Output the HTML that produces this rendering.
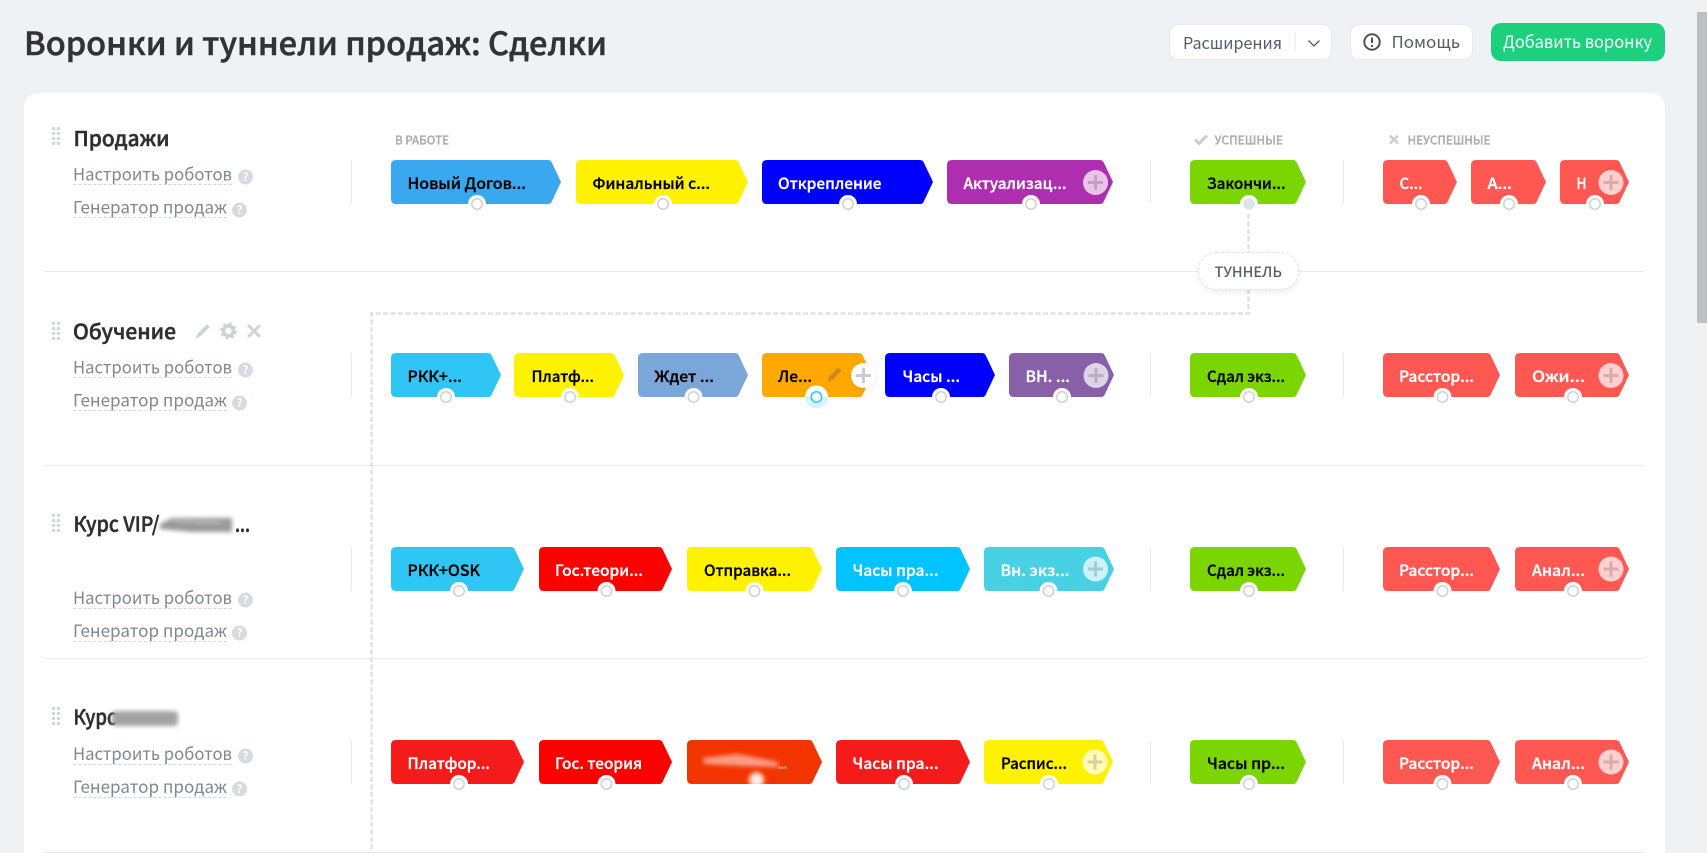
<!DOCTYPE html>
<html lang="ru"><head><meta charset="utf-8"><title>Воронки и туннели продаж: Сделки</title>
<style>
html,body{margin:0;padding:0;width:1707px;height:853px;overflow:hidden;background:#eef2f5}
svg{display:block;position:absolute;left:0;top:0}
text{font-family:"Noto Sans CJK SC","Liberation Sans",sans-serif}
.h{font-size:32px;font-weight:500;fill:#333;stroke:#333;stroke-width:.55}
.t{font-size:20.5px;font-weight:500;fill:#2f2f2f;stroke:#2f2f2f;stroke-width:.5}
.l{font-size:17px;fill:#7f8791}
.s{font-size:12px;font-weight:500;fill:#a9aeb6;stroke:#a9aeb6;stroke-width:.3}
.b{font-size:15.5px;font-weight:500;fill:#000;stroke:#000;stroke-width:.3}
.w{font-size:15.5px;font-weight:500;fill:#fff;stroke:#fff;stroke-width:.3}
.u{stroke:#cfd4da;stroke-width:1;stroke-dasharray:3 2;fill:none}
.d{stroke:#e8eaed;stroke-width:1;fill:none}
.q{font-size:11px;font-weight:700;fill:#fff;text-anchor:middle}
</style></head><body>
<svg width="1707" height="853" viewBox="0 0 1707 853" xmlns="http://www.w3.org/2000/svg">
<defs>
<path id="w69" d="M5 0h51q3 0 4 3l9 19-9 19q-1 3-4 3h-51q-5 0-5-5v-34q0-5 5-5z"/>
<path id="w74" d="M5 0h56q3 0 4 3l9 19-9 19q-1 3-4 3h-56q-5 0-5-5v-34q0-5 5-5z"/>
<path id="w75" d="M5 0h57q3 0 4 3l9 19-9 19q-1 3-4 3h-57q-5 0-5-5v-34q0-5 5-5z"/>
<path id="w105" d="M5 0h87q3 0 4 3l9 19-9 19q-1 3-4 3h-87q-5 0-5-5v-34q0-5 5-5z"/>
<path id="w110" d="M5 0h92q3 0 4 3l9 19-9 19q-1 3-4 3h-92q-5 0-5-5v-34q0-5 5-5z"/>
<path id="w114" d="M5 0h96q3 0 4 3l9 19-9 19q-1 3-4 3h-96q-5 0-5-5v-34q0-5 5-5z"/>
<path id="w116" d="M5 0h98q3 0 4 3l9 19-9 19q-1 3-4 3h-98q-5 0-5-5v-34q0-5 5-5z"/>
<path id="w117" d="M5 0h99q3 0 4 3l9 19-9 19q-1 3-4 3h-99q-5 0-5-5v-34q0-5 5-5z"/>
<path id="w129" d="M5 0h111q3 0 4 3l9 19-9 19q-1 3-4 3h-111q-5 0-5-5v-34q0-5 5-5z"/>
<path id="w130" d="M5 0h112q3 0 4 3l9 19-9 19q-1 3-4 3h-112q-5 0-5-5v-34q0-5 5-5z"/>
<path id="w133" d="M5 0h115q3 0 4 3l9 19-9 19q-1 3-4 3h-115q-5 0-5-5v-34q0-5 5-5z"/>
<path id="w134" d="M5 0h116q3 0 4 3l9 19-9 19q-1 3-4 3h-116q-5 0-5-5v-34q0-5 5-5z"/>
<path id="w135" d="M5 0h117q3 0 4 3l9 19-9 19q-1 3-4 3h-117q-5 0-5-5v-34q0-5 5-5z"/>
<path id="w166" d="M5 0h148q3 0 4 3l9 19-9 19q-1 3-4 3h-148q-5 0-5-5v-34q0-5 5-5z"/>
<path id="w170" d="M5 0h152q3 0 4 3l9 19-9 19q-1 3-4 3h-152q-5 0-5-5v-34q0-5 5-5z"/>
<path id="w171" d="M5 0h153q3 0 4 3l9 19-9 19q-1 3-4 3h-153q-5 0-5-5v-34q0-5 5-5z"/>
<path id="w172" d="M5 0h154q3 0 4 3l9 19-9 19q-1 3-4 3h-154q-5 0-5-5v-34q0-5 5-5z"/>
<g id="dot"><circle r="9" fill="#fff"/><circle r="5.2" fill="#fff" stroke="#cdd1d7" stroke-width="1.5"/></g>
<g id="plus"><circle r="12.5" fill="#fff" fill-opacity=".72"/><path d="M-7.5 0H7.5M0-7.5V7.5" stroke="#000" stroke-opacity=".17" stroke-width="3"/></g>
<g id="hq"><circle r="7.5" fill="#d6dae1"/><text class="q" y="4">?</text></g>
<g id="drag" fill="#d3d6da"><rect x="0" y="0" width="3" height="3"/><rect x="5" y="0" width="3" height="3"/><rect x="0" y="5" width="3" height="3"/><rect x="5" y="5" width="3" height="3"/><rect x="0" y="10" width="3" height="3"/><rect x="5" y="10" width="3" height="3"/><rect x="0" y="15" width="3" height="3"/><rect x="5" y="15" width="3" height="3"/></g>
<filter id="bl" x="-30%" y="-100%" width="160%" height="300%"><feGaussianBlur stdDeviation="2.2"/></filter>
<filter id="bl2" x="-50%" y="-100%" width="200%" height="300%"><feGaussianBlur stdDeviation="2.5"/></filter>
<filter id="sh" x="-20%" y="-30%" width="140%" height="170%"><feDropShadow dx="0" dy="2" stdDeviation="3" flood-color="#000" flood-opacity=".08"/></filter>
</defs>

<!-- page -->
<rect width="1707" height="853" fill="#eef2f5"/>
<rect x="1697" y="0" width="10" height="853" fill="#f1f1f1"/>
<rect x="1697" y="12" width="10" height="311" fill="#bcc0c2"/>
<text class="h" x="24" y="55" textLength="583" lengthAdjust="spacingAndGlyphs">Воронки и туннели продаж: Сделки</text>

<!-- header buttons -->
<rect x="1169.500" y="24.500" width="162" height="35" rx="9" fill="#fff" stroke="#e6e9ec"/>
<text x="1183" y="49" font-size="16.500" fill="#535c69" textLength="99" lengthAdjust="spacingAndGlyphs">Расширения</text>
<path d="M1295 32V52" stroke="#e3e5e8"/>
<path d="M1308.500 40.500l5.500 5.500 5.500-5.500" fill="none" stroke="#535c69" stroke-width="1.3"/>
<rect x="1350.500" y="24.500" width="122" height="35" rx="9" fill="#fff" stroke="#e6e9ec"/>
<circle cx="1372" cy="42" r="7.700" fill="none" stroke="#4a525e" stroke-width="2"/>
<path d="M1372 37.500v5.500M1372 45v2" stroke="#4a525e" stroke-width="2"/>
<text x="1391.500" y="48" font-size="16.500" fill="#535c69" textLength="68.500" lengthAdjust="spacingAndGlyphs">Помощь</text>
<rect x="1491" y="23" width="174" height="38" rx="10" fill="#1dd07d"/>
<text x="1503" y="48" font-size="17" fill="#fff" textLength="149" lengthAdjust="spacingAndGlyphs">Добавить воронку</text>

<!-- card -->
<path d="M24 853V109q0-16 16-16H1649q16 0 16 16V853z" fill="#fff"/>
<path class="d" d="M44 271.500H1644M44 465.500H1644M44 658.500H1644M44 852.500H1644"/>

<!-- column labels -->
<text class="s" x="395" y="144.500" textLength="54" lengthAdjust="spacingAndGlyphs">В РАБОТЕ</text>
<path d="M1195 139.500l4 4 8-8" fill="none" stroke="#c9cdd2" stroke-width="3"/>
<text class="s" x="1214.500" y="144.500" textLength="68.500" lengthAdjust="spacingAndGlyphs">УСПЕШНЫЕ</text>
<path d="M1390 135.500l8 8M1398 135.500l-8 8" fill="none" stroke="#c9cdd2" stroke-width="2.500"/>
<text class="s" x="1407.500" y="144.500" textLength="83" lengthAdjust="spacingAndGlyphs">НЕУСПЕШНЫЕ</text>

<!-- dividers -->
<path class="d" d="M351.500 160V204M1150.500 160V204M1343.500 160V204M351.500 353V397M1150.500 353V397M1343.500 353V397M351.500 547V591M1150.500 547V591M1343.500 547V591M351.500 740V784M1150.500 740V784M1343.500 740V784"/>

<!-- tunnel line -->
<path d="M1248.500 214V313.500H371.500V853" fill="none" stroke="#dde1e6" stroke-width="2.500" stroke-dasharray="5 2.500"/>
<rect x="1198.500" y="252.500" width="100" height="37" rx="18" fill="#fff" stroke="#dfe3e7" stroke-dasharray="3 2" filter="url(#sh)"/>
<text x="1214.500" y="277" font-size="14" font-weight="500" fill="#585d64" textLength="67.500" lengthAdjust="spacingAndGlyphs">ТУННЕЛЬ</text>

<!-- left column row 1 -->
<use href="#drag" x="52" y="127"/>
<text class="t" x="73.500" y="146" textLength="96" lengthAdjust="spacingAndGlyphs">Продажи</text>
<text class="l" x="73" y="180.500" textLength="159" lengthAdjust="spacingAndGlyphs">Настроить роботов</text>
<path class="u" d="M73.500 184.500H232"/><use href="#hq" x="245.500" y="177"/>
<text class="l" x="73" y="213.500" textLength="154" lengthAdjust="spacingAndGlyphs">Генератор продаж</text>
<path class="u" d="M73.500 217.500H227"/><use href="#hq" x="239.500" y="210"/>

<!-- left column row 2 -->
<use href="#drag" x="52" y="322"/>
<text class="t" x="73" y="339" textLength="103" lengthAdjust="spacingAndGlyphs">Обучение</text>
<path d="M196.500 337.500l2-4 8.500-8.500 2 2-8.500 8.500z" fill="#cfd3d7" stroke="#cfd3d7" stroke-width="1.200"/>
<circle cx="228.500" cy="331" r="5" fill="none" stroke="#cfd3d7" stroke-width="3.500"/>
<circle cx="228.500" cy="331" r="7.200" fill="none" stroke="#cfd3d7" stroke-width="2.500" stroke-dasharray="3 2.650"/>
<path d="M248 325l12 12M260 325l-12 12" stroke="#cfd3d7" stroke-width="3"/>
<text class="l" x="73" y="373.500" textLength="159" lengthAdjust="spacingAndGlyphs">Настроить роботов</text>
<path class="u" d="M73.500 377.500H232"/><use href="#hq" x="245.500" y="370"/>
<text class="l" x="73" y="406.500" textLength="154" lengthAdjust="spacingAndGlyphs">Генератор продаж</text>
<path class="u" d="M73.500 410.500H227"/><use href="#hq" x="239.500" y="403"/>

<!-- left column row 3 -->
<use href="#drag" x="52" y="514"/>
<text class="t" x="73.500" y="531.500" textLength="86" lengthAdjust="spacingAndGlyphs">Курс VIP/</text>
<path d="M160 524l12-6 60 0v14l-40 0-32-3z" fill="#999" filter="url(#bl)"/>
<path d="M172 520l50 3" stroke="#ddd" stroke-width="1.500" filter="url(#bl2)"/>
<text class="t" x="235" y="531.500" textLength="15" lengthAdjust="spacingAndGlyphs">...</text>
<text class="l" x="73" y="604" textLength="159" lengthAdjust="spacingAndGlyphs">Настроить роботов</text>
<path class="u" d="M73.500 608.500H232"/><use href="#hq" x="245.500" y="600"/>
<text class="l" x="73" y="637" textLength="154" lengthAdjust="spacingAndGlyphs">Генератор продаж</text>
<path class="u" d="M73.500 641.500H227"/><use href="#hq" x="239.500" y="633"/>

<!-- left column row 4 -->
<use href="#drag" x="52" y="707"/>
<text class="t" x="73.500" y="724.500" textLength="43" lengthAdjust="spacingAndGlyphs">Курс</text>
<rect x="112" y="711" width="66" height="15" rx="4" fill="#a3a3a3" filter="url(#bl)"/>
<text class="l" x="73" y="760" textLength="159" lengthAdjust="spacingAndGlyphs">Настроить роботов</text>
<path class="u" d="M73.500 764.500H232"/><use href="#hq" x="245.500" y="756"/>
<text class="l" x="73" y="793" textLength="154" lengthAdjust="spacingAndGlyphs">Генератор продаж</text>
<path class="u" d="M73.500 797.500H227"/><use href="#hq" x="239.500" y="789"/>

<!-- ROW 1 pills -->
<use href="#w170" x="391" y="160" fill="#39a8ef"/>
<text class="b" x="407.500" y="189" textLength="118.500" lengthAdjust="spacingAndGlyphs">Новый Догов...</text>
<use href="#dot" x="477" y="204"/>
<use href="#w172" x="576" y="160" fill="#fff200"/>
<text class="b" x="592.500" y="189" textLength="117.500" lengthAdjust="spacingAndGlyphs">Финальный с...</text>
<use href="#dot" x="663" y="204"/>
<use href="#w171" x="762" y="160" fill="#0000ff"/>
<text class="w" x="778" y="189" textLength="103.500" lengthAdjust="spacingAndGlyphs">Открепление</text>
<use href="#dot" x="848" y="204"/>
<use href="#w166" x="947" y="160" fill="#ae2eb0"/>
<text class="w" x="963.500" y="189" textLength="103" lengthAdjust="spacingAndGlyphs">Актуализац...</text>
<use href="#plus" x="1095.500" y="182.500"/>
<use href="#dot" x="1031" y="204"/>
<use href="#w116" x="1190" y="160" fill="#7bd500"/>
<text class="b" x="1207" y="189" textLength="78.500" lengthAdjust="spacingAndGlyphs">Закончи...</text>
<circle cx="1249" cy="204" r="9" fill="#fff"/><circle cx="1249" cy="204" r="5.800" fill="#dfe4e8"/>
<use href="#w74" x="1383" y="160" fill="#ff5752"/>
<text class="w" x="1399.500" y="189" textLength="23" lengthAdjust="spacingAndGlyphs">С...</text>
<use href="#dot" x="1421" y="204"/>
<use href="#w75" x="1471" y="160" fill="#ff5752"/>
<text class="w" x="1487.500" y="189" textLength="24.500" lengthAdjust="spacingAndGlyphs">А...</text>
<use href="#dot" x="1509" y="204"/>
<use href="#w69" x="1560" y="160" fill="#ff5752"/>
<text class="w" x="1576.500" y="189" textLength="10" lengthAdjust="spacingAndGlyphs">Н</text>
<use href="#plus" x="1611" y="182.500"/>
<use href="#dot" x="1595" y="204"/>

<!-- ROW 2 pills -->
<use href="#w110" x="391" y="353" fill="#2fc6f6"/>
<text class="b" x="407.500" y="382" textLength="54.500" lengthAdjust="spacingAndGlyphs">РКК+...</text>
<use href="#dot" x="446" y="397"/>
<use href="#w110" x="514" y="353" fill="#fff200"/>
<text class="b" x="531.500" y="382" textLength="62.500" lengthAdjust="spacingAndGlyphs">Платф...</text>
<use href="#dot" x="570" y="397"/>
<use href="#w110" x="638" y="353" fill="#7ba6d9"/>
<text class="b" x="654.500" y="382" textLength="59.500" lengthAdjust="spacingAndGlyphs">Ждет ...</text>
<use href="#dot" x="693.500" y="397"/>
<use href="#w110" x="762" y="353" fill="#ffa900"/>
<text class="b" x="778" y="382" textLength="34" lengthAdjust="spacingAndGlyphs">Ле...</text>
<path d="M827.500 382l1.500-5 9-9.500 3.500 3-9 9.500z" fill="#c98a1e"/>
<circle cx="816.500" cy="397" r="11.500" fill="#d8f2fb"/>
<path d="M805 397a11.500 11.500 0 0 1 23 0z" fill="#fff"/>
<circle cx="816.500" cy="397" r="5.200" fill="#fff" stroke="#2fc6f6" stroke-width="1.500"/>
<circle cx="863.500" cy="375.500" r="12.500" fill="#fff" filter="url(#sh)"/>
<path d="M856 375.500H871M863.500 368V383" stroke="#c9cdd2" stroke-width="3"/>
<use href="#w110" x="885" y="353" fill="#0000ff"/>
<text class="w" x="902.500" y="382" textLength="57.500" lengthAdjust="spacingAndGlyphs">Часы ...</text>
<use href="#dot" x="941" y="397"/>
<use href="#w105" x="1009" y="353" fill="#8760a8"/>
<text class="w" x="1025.500" y="382" textLength="44.500" lengthAdjust="spacingAndGlyphs">ВН. ...</text>
<use href="#plus" x="1096" y="375.500"/>
<use href="#dot" x="1062" y="397"/>
<use href="#w116" x="1190" y="353" fill="#7bd500"/>
<text class="b" x="1207" y="382" textLength="78" lengthAdjust="spacingAndGlyphs">Сдал экз...</text>
<use href="#dot" x="1249" y="397"/>
<use href="#w117" x="1383" y="353" fill="#ff5752"/>
<text class="w" x="1399" y="382" textLength="75" lengthAdjust="spacingAndGlyphs">Расстор...</text>
<use href="#dot" x="1442.500" y="397"/>
<use href="#w114" x="1515" y="353" fill="#ff5752"/>
<text class="w" x="1532" y="382" textLength="53" lengthAdjust="spacingAndGlyphs">Ожи...</text>
<use href="#plus" x="1611" y="375.500"/>
<use href="#dot" x="1573" y="397"/>

<!-- ROW 3 pills -->
<use href="#w133" x="391" y="547" fill="#2fc6f6"/>
<text class="b" x="407.500" y="576" textLength="72.500" lengthAdjust="spacingAndGlyphs">РКК+OSK</text>
<use href="#dot" x="459" y="591"/>
<use href="#w133" x="539" y="547" fill="#ff0000"/>
<text class="w" x="555" y="576" textLength="88" lengthAdjust="spacingAndGlyphs">Гос.теори...</text>
<use href="#dot" x="606.500" y="591"/>
<use href="#w135" x="687" y="547" fill="#fff200"/>
<text class="b" x="704" y="576" textLength="87" lengthAdjust="spacingAndGlyphs">Отправка...</text>
<use href="#dot" x="754.500" y="591"/>
<use href="#w134" x="836" y="547" fill="#00c3ff"/>
<text class="w" x="852.500" y="576" textLength="86" lengthAdjust="spacingAndGlyphs">Часы пра...</text>
<use href="#dot" x="903" y="591"/>
<use href="#w130" x="984" y="547" fill="#47d1e2"/>
<text class="w" x="1000.500" y="576" textLength="69" lengthAdjust="spacingAndGlyphs">Вн. экз...</text>
<use href="#plus" x="1095.500" y="569"/>
<use href="#dot" x="1048.500" y="591"/>
<use href="#w116" x="1190" y="547" fill="#7bd500"/>
<text class="b" x="1207" y="576" textLength="78" lengthAdjust="spacingAndGlyphs">Сдал экз...</text>
<use href="#dot" x="1249" y="591"/>
<use href="#w117" x="1383" y="547" fill="#ff5752"/>
<text class="w" x="1399" y="576" textLength="75" lengthAdjust="spacingAndGlyphs">Расстор...</text>
<use href="#dot" x="1442.500" y="591"/>
<use href="#w114" x="1515" y="547" fill="#ff5752"/>
<text class="w" x="1532" y="576" textLength="53" lengthAdjust="spacingAndGlyphs">Анал...</text>
<use href="#plus" x="1611" y="569"/>
<use href="#dot" x="1573" y="591"/>

<!-- ROW 4 pills -->
<use href="#w133" x="391" y="740" fill="#f51b1b"/>
<text class="w" x="407.500" y="769" textLength="82.500" lengthAdjust="spacingAndGlyphs">Платфор...</text>
<use href="#dot" x="459" y="784"/>
<use href="#w133" x="539" y="740" fill="#ff0000"/>
<text class="w" x="555" y="769" textLength="87" lengthAdjust="spacingAndGlyphs">Гос. теория</text>
<use href="#dot" x="606.500" y="784"/>
<use href="#w135" x="687" y="740" fill="#f23500"/>
<path d="M703 758l35-4 40 8v5l-36-1-38-2z" fill="#fa9c85" filter="url(#bl)"/>
<text class="w" x="778" y="769" textLength="9" lengthAdjust="spacingAndGlyphs" fill-opacity=".7" stroke-opacity=".5">...</text>
<circle cx="756.500" cy="780" r="7.500" fill="#fff" fill-opacity=".9" filter="url(#bl2)"/>
<use href="#w134" x="836" y="740" fill="#f51b1b"/>
<text class="w" x="852.500" y="769" textLength="86" lengthAdjust="spacingAndGlyphs">Часы пра...</text>
<use href="#dot" x="904" y="784"/>
<use href="#w129" x="984" y="740" fill="#fff200"/>
<text class="b" x="1001" y="769" textLength="66" lengthAdjust="spacingAndGlyphs">Распис...</text>
<use href="#plus" x="1095" y="762"/>
<use href="#dot" x="1049" y="784"/>
<use href="#w116" x="1190" y="740" fill="#7bd500"/>
<text class="b" x="1207" y="769" textLength="78" lengthAdjust="spacingAndGlyphs">Часы пр...</text>
<use href="#dot" x="1249" y="784"/>
<use href="#w117" x="1383" y="740" fill="#ff5752"/>
<text class="w" x="1399" y="769" textLength="75" lengthAdjust="spacingAndGlyphs">Расстор...</text>
<use href="#dot" x="1442.500" y="784"/>
<use href="#w114" x="1515" y="740" fill="#ff5752"/>
<text class="w" x="1532" y="769" textLength="53" lengthAdjust="spacingAndGlyphs">Анал...</text>
<use href="#plus" x="1611" y="762"/>
<use href="#dot" x="1573" y="784"/>
</svg>
</body></html>
